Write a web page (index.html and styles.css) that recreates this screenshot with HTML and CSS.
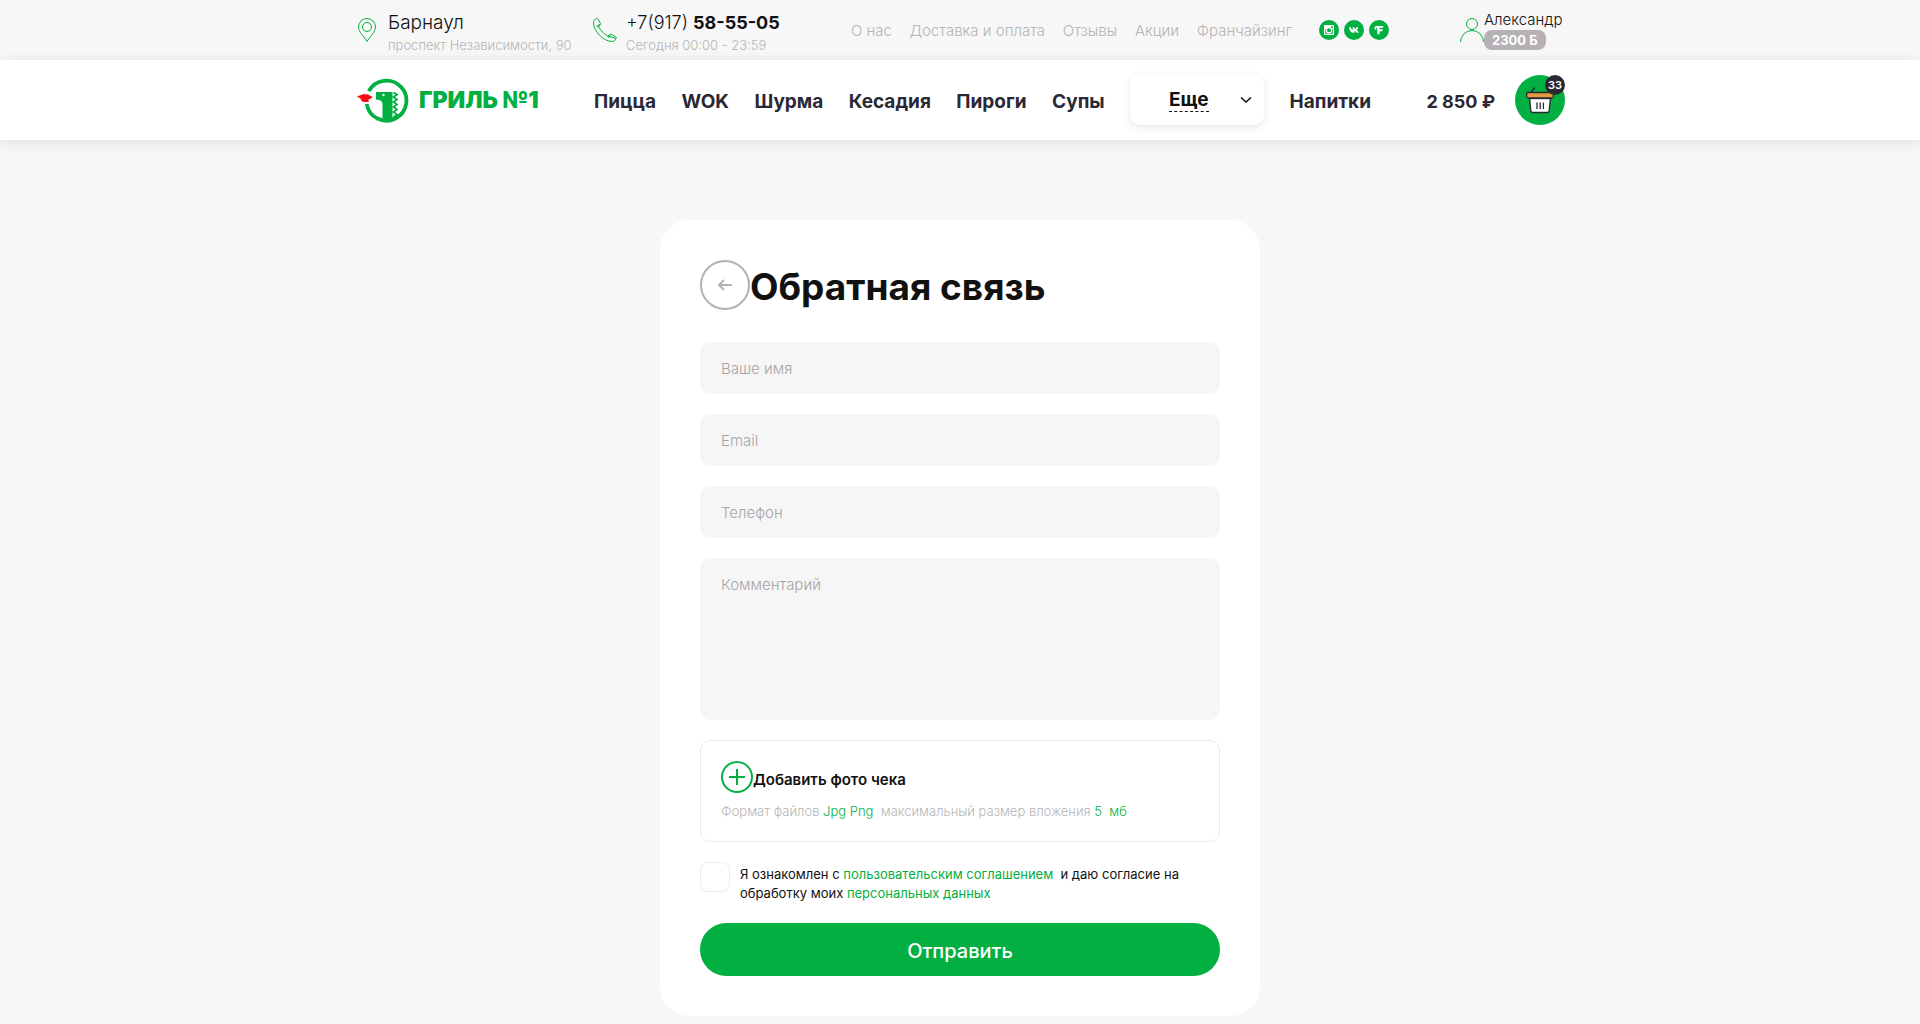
FILE: index.html
```html
<!DOCTYPE html>
<html lang="ru">
<head>
  <meta charset="utf-8">
  <meta name="viewport" content="width=device-width, initial-scale=1">
  <title>Обратная связь — Гриль №1</title>
  <link rel="stylesheet" href="styles.css">
</head>
<body>
  <header class="header">
    <div class="topbar">
      <div class="container topbar__inner">
        <a class="contact contact--city" href="#">
          <svg class="contact__icon" width="24" height="24" viewBox="0 0 24 24" aria-hidden="true"><path d="M12 23.5C9.500 19 3.500 14 3.500 9a8.500 8.500 0 0 1 17 0c0 5-6 10-8.500 14.500z"/><circle cx="12" cy="9" r="4.500"/></svg>
          <span class="contact__text">
            <span class="contact__main">Барнаул</span>
            <span class="contact__note">проспект Независимости, 90</span>
          </span>
        </a>
        <a class="contact contact--phone" href="tel:+7917585505">
          <svg class="contact__icon" width="24" height="24" viewBox="0 0 24 24" aria-hidden="true"><path d="M1.200 2.300 3.300.7c.7-.4 1.400-.2 1.800.5l2.400 4.100c.4.700.2 1.400-.4 1.900L5.600 8.300c1.600 4 5 7.700 9.400 10l1.500-1.700c.5-.6 1.200-.7 1.900-.3l4.200 2.500c.7.400.9 1.100.5 1.800l-1.500 2c-.5.600-1.300.9-2.300.9C10.500 23.500.5 13.500.5 4.600c0-1 .2-1.800.7-2.300z"/><path d="M3.500 8.500 7 6.200M15.200 19.800l2.800-3.300M4 9l1.600-.7M15 18.300l7.800 2"/></svg>
          <span class="contact__text">
            <span class="contact__main">+7(917) <b>58-55-05</b></span>
            <span class="contact__note">Сегодня 00:00 - 23:59</span>
          </span>
        </a>
        <nav class="info-links" aria-label="Информация">
          <a href="#">О нас</a>
          <a href="#">Доставка и оплата</a>
          <a href="#">Отзывы</a>
          <a href="#">Акции</a>
          <a href="#">Франчайзинг</a>
        </nav>
        <div class="socials">
          <a href="#" aria-label="Instagram"><svg width="20" height="20" viewBox="0 0 20 20"><circle cx="10" cy="10" r="10" fill="#02af41"/><rect x="5" y="5" width="10" height="10" rx="1" fill="#fff"/><path d="M6.200 9h7.600v4.800H6.200zM12 6.200h1.800V8H12z" fill="#02af41"/><circle cx="10" cy="10.200" r="3.200" fill="#fff"/><circle cx="10" cy="10.200" r="2" fill="#02af41"/></svg></a>
          <a href="#" aria-label="ВКонтакте"><svg width="20" height="20" viewBox="0 0 20 20"><circle cx="10" cy="10" r="10" fill="#02af41"/><path d="M5 7.200h1.900c.4 1.400 1 2.500 1.700 3V7.200h2v2.300c.8-.4 1.300-1.200 1.800-2.300h2c-.3 1.100-.9 2-1.800 2.700 1 .6 1.700 1.500 2.200 2.900h-2.100c-.4-1-1-1.700-2.100-1.900v1.900H10c-2.900 0-4.600-2-5-5.600z" fill="#fff"/></svg></a>
          <a href="#" aria-label="Flamp"><svg width="20" height="20" viewBox="0 0 20 20"><circle cx="10" cy="10" r="10" fill="#02af41"/><path d="M5.500 7.800c0-1 .9-1.800 2-1.800h6.700v1.800h-3.700v1.500h3v1.900h-3v3H8.300V7.700H7.200v2.100H6.500c-.6 0-1-.8-1-2z" fill="#fff"/></svg></a>
        </div>
        <a class="user" href="#">
          <svg width="24" height="24" viewBox="0 0 24 24" aria-hidden="true"><circle cx="12" cy="6" r="5.500"/><path d="M.5 24a11.500 11.500 0 0 1 23 0"/></svg>
          <span class="user__text">
            <span class="user__name">Александр</span>
            <span class="user__bonus">2300 Б</span>
          </span>
        </a>
      </div>
    </div>
    <div class="mainbar">
      <div class="container mainbar__inner">
        <a class="logo" href="#">
          <svg width="54" height="46" viewBox="0 0 54 46" aria-hidden="true"><path d="M13.800 14.200A20 20 0 1 1 11.700 27" fill="none" stroke="#02af41" stroke-width="3.800"/><path d="M21 15h16.500v28.500c-3.500 1-7 .8-10-.5V27.500c0-3-2-4.700-6.500-4.900z" fill="#02af41"/><circle cx="28.500" cy="18" r="1.200" fill="#fff"/><path d="m38.500 15.500 3.500 2-3.500 2.500 3.500 2.500-3.500 2.500 3.500 2.500-3.500 2.500 3.500 2.500-3.500 2.500 3.500 2.500-3.500 3" fill="none" stroke="#02af41" stroke-width="1.800"/><path d="M2 19c3-.2 4.800-2 8.200-2.600l-1 1.300c2-.9 3.800-.6 5.600.7l2.800 1.600c-1.800 1.900-3.200 2.600-4.600 2.800l1.200 1.600c-4 1.500-7.700.4-8.700-1.900l1.500-.4C5 21.800 3.500 20.700 2 19z" fill="#f80d16"/></svg>
          <span class="logo__name">ГРИЛЬ №1</span>
        </a>
        <nav class="menu" aria-label="Меню">
          <a href="#">Пицца</a>
          <a href="#">WOK</a>
          <a href="#">Шурма</a>
          <a href="#">Кесадия</a>
          <a href="#">Пироги</a>
          <a href="#">Супы</a>
          <button class="more" type="button">
            <span class="more__label">Еще</span>
            <svg class="more__arrow" width="12" height="8" viewBox="0 0 12 8" aria-hidden="true"><path d="m1 1.500 5 4.500 5-4.500" fill="none" stroke="#111" stroke-width="1.600"/></svg>
          </button>
          <a href="#">Напитки</a>
        </nav>
        <a class="cart" href="#">
          <span class="cart__sum">2 850 ₽</span>
          <span class="cart__icon">
            <svg width="50" height="50" viewBox="0 0 50 50" aria-hidden="true"><circle cx="25" cy="25" r="25" fill="#02af41"/><path d="M16 17.500 19.500 12.500" stroke="#2a2833" stroke-width="1.500"/><path d="M14.500 22h21l-1.300 13.500c-.1 1.300-.9 2-2 2H17.800c-1.100 0-1.900-.7-2-2z" fill="#fff" stroke="#2a2833" stroke-width="1.300"/><path d="M15.200 22.500h19.600v1.700H15.200z" fill="#2a2833"/><rect x="11.700" y="17.500" width="26.600" height="5.500" rx="1.500" fill="#e29b38" stroke="#2a2833" stroke-width="1.300"/><path d="M22 27.500V34M25.200 27.500V34M28.400 27.500V34" stroke="#2a2833" stroke-width="1.300"/></svg>
            <span class="cart__count">33</span>
          </span>
        </a>
      </div>
    </div>
  </header>

  <main class="page">
    <form class="card">
      <div class="card__head">
        <button class="back" type="button" aria-label="Назад">
          <svg width="16" height="12" viewBox="0 0 16 12" aria-hidden="true"><path d="M7 1 2 6l5 5M2 6h13" fill="none" stroke="#b5b1b4" stroke-width="2"/></svg>
        </button>
        <h1 class="card__title">Обратная связь</h1>
      </div>

      <div class="fields">
        <input class="field" type="text" name="name" placeholder="Ваше имя" aria-label="Ваше имя">
        <input class="field" type="email" name="email" placeholder="Email" aria-label="Email">
        <input class="field" type="tel" name="phone" placeholder="Телефон" aria-label="Телефон">
        <textarea class="field field--area" name="comment" placeholder="Комментарий" aria-label="Комментарий"></textarea>

        <div class="upload">
          <input id="receipt" type="file" accept=".jpg,.png" hidden>
          <label class="upload__label" for="receipt">
            <svg width="32" height="32" viewBox="0 0 32 32" aria-hidden="true"><circle cx="16" cy="16" r="15"/><path d="M16 8v16M8 16h16"/></svg>
            <span>Добавить фото чека</span>
          </label>
          <p class="upload__note">Формат файлов <span class="green">Jpg Png</span>&nbsp; максимальный размер вложения <span class="green">5&nbsp; мб</span></p>
        </div>

        <div class="agree">
          <input class="agree__box" id="agree" type="checkbox">
          <label class="agree__text" for="agree">Я ознакомлен с <a href="#">пользовательским соглашением</a>&nbsp; и даю согласие на обработку моих <a href="#">персональных данных</a></label>
        </div>
      </div>
      <button class="submit" type="submit">Отправить</button>
    </form>
  </main>
</body>
</html>
```
FILE: styles.css
```css
*,
*::before,
*::after {
  box-sizing: border-box;
}

body {
  margin: 0;
  background: #f7f7f7;
  color: #111;
  font-family: Inter, "Open Sans", sans-serif;
  font-size: 15px;
}

a {
  color: inherit;
  text-decoration: none;
}

button,
input,
textarea {
  font: inherit;
}

.container {
  max-width: 1240px;
  margin: 0 auto;
  padding: 0 15px;
}

.topbar__inner {
  display: flex;
  align-items: center;
  height: 60px;
}

/* Contacts */
.contact {
  display: flex;
  align-items: center;
  gap: 9px;
}

.contact--city {
  width: 238px;
}

.contact--city .contact__main {
  font-size: 19px;
}

.contact--phone {
  width: 258px;
}

.contact__icon,
.user svg {
  flex: none;
  fill: none;
  stroke: #02af41;
}

.contact__text {
  display: flex;
  flex-direction: column;
  padding-top: 3px;
  white-space: nowrap;
}

.contact__main {
  font-size: 18px;
  font-weight: 300;
  line-height: 26px;
}

.contact__main b {
  font-weight: 700;
}

.contact__note {
  color: #b5b5b5;
  font-size: 13px;
  font-weight: 300;
  line-height: 18px;
}

.info-links {
  display: flex;
  justify-content: space-between;
  width: 441px;
  color: #b5b5b5;
  font-weight: 300;
  white-space: nowrap;
}

.socials {
  display: flex;
  gap: 5px;
  margin-left: 27px;
}

.socials svg {
  display: block;
}

.user {
  display: flex;
  align-items: center;
  margin-left: auto;
}

.user__text {
  display: flex;
  flex-direction: column;
  align-items: flex-start;
  width: 81px;
}

.user__name {
  font-weight: 300;
  line-height: 20px;
}

.user__bonus {
  padding: 0 8px;
  border-radius: 8px;
  background: #b5b1b4;
  color: #fff;
  font-size: 13px;
  font-weight: 700;
  line-height: 20px;
}

/* Main bar */
.mainbar {
  background: #fff;
  box-shadow: 0 2px 12px rgba(0, 0, 0, 0.1);
}

.mainbar__inner {
  display: flex;
  align-items: center;
  height: 80px;
  color: #2a2833;
  font-size: 19px;
  font-weight: 700;
}

.logo {
  display: flex;
  align-items: center;
  gap: 10px;
  width: 239px;
  color: #02af41;
}

.logo__name {
  font-size: 23px;
  font-weight: 900;
  white-space: nowrap;
}

.menu {
  display: flex;
  align-items: center;
  justify-content: space-between;
  width: 777px;
}

.menu a,
.cart__sum {
  padding-top: 2px;
}

.more {
  display: flex;
  align-items: center;
  justify-content: space-between;
  width: 134px;
  height: 50px;
  padding: 0 12px 0 39px;
  border: 0;
  border-radius: 10px;
  background: #fff;
  box-shadow: 0 2px 8px rgba(0, 0, 0, 0.1);
  color: #111;
}

.more__label {
  border-bottom: 1px dashed #111;
  line-height: 22px;
}

.cart {
  display: flex;
  align-items: center;
  gap: 20px;
  margin-left: auto;
  font-size: 18px;
}

.cart__icon {
  position: relative;
}

.cart__icon svg {
  display: block;
}

.cart__count {
  position: absolute;
  top: 0;
  right: 0;
  width: 20px;
  border-radius: 50%;
  background: #2a2833;
  color: #fff;
  font-size: 11px;
  font-weight: 600;
  line-height: 20px;
  text-align: center;
}

/* Feedback form */
.page {
  padding: 80px 15px 8px;
}

.card {
  max-width: 600px;
  margin: 0 auto;
  padding: 40px;
  border-radius: 30px;
  background: #fff;
}

.card__head {
  display: flex;
  align-items: center;
  margin-bottom: 32px;
}

.back {
  display: flex;
  align-items: center;
  justify-content: center;
  width: 50px;
  height: 50px;
  padding: 0;
  border: 2px solid #b5b1b4;
  border-radius: 50%;
  background: none;
}

.card__title {
  margin: 0;
  padding-top: 4px;
  font-size: 37px;
  font-weight: 700;
  line-height: 44px;
}

.fields {
  display: flex;
  flex-direction: column;
  gap: 20px;
}

.field {
  width: 100%;
  height: 52px;
  padding: 0 21px;
  border: 0;
  border-radius: 10px;
  background: #f6f6f6;
  font-weight: 300;
}

.field::placeholder {
  color: #a5a5a5;
  opacity: 1;
}

.field--area {
  display: block;
  height: 162px;
  padding: 17px 21px;
  line-height: 20px;
  resize: none;
}

.upload {
  padding: 20px;
  border: 1px solid #ebebeb;
  border-radius: 10px;
}

.upload__label {
  display: flex;
  align-items: center;
  font-weight: 600;
}

.upload__label span {
  padding-top: 4px;
}

.upload__label svg {
  fill: none;
  stroke: #02af41;
  stroke-width: 2;
}

.upload__note {
  margin: 8px 0 0;
  color: #b5b5b5;
  font-size: 13px;
  font-weight: 300;
  line-height: 20px;
}

.green,
.agree a {
  color: #02af41;
}

.agree {
  display: flex;
  align-items: flex-start;
  gap: 10px;
}

.agree__box {
  flex: none;
  width: 30px;
  height: 30px;
  margin: 0;
  border: 1px solid #ebebeb;
  border-radius: 8px;
  background: #fff;
  appearance: none;
}

.agree__box:checked {
  background: #02af41;
}

.agree__text {
  padding-top: 3px;
  font-size: 13px;
  line-height: 19px;
}

.submit {
  display: block;
  width: 100%;
  height: 53px;
  margin-top: 20px;
  padding: 2px 0 0;
  border: 0;
  border-radius: 27px;
  background: #02af41;
  color: #fff;
  font-size: 20px;
  font-weight: 500;
}
```
